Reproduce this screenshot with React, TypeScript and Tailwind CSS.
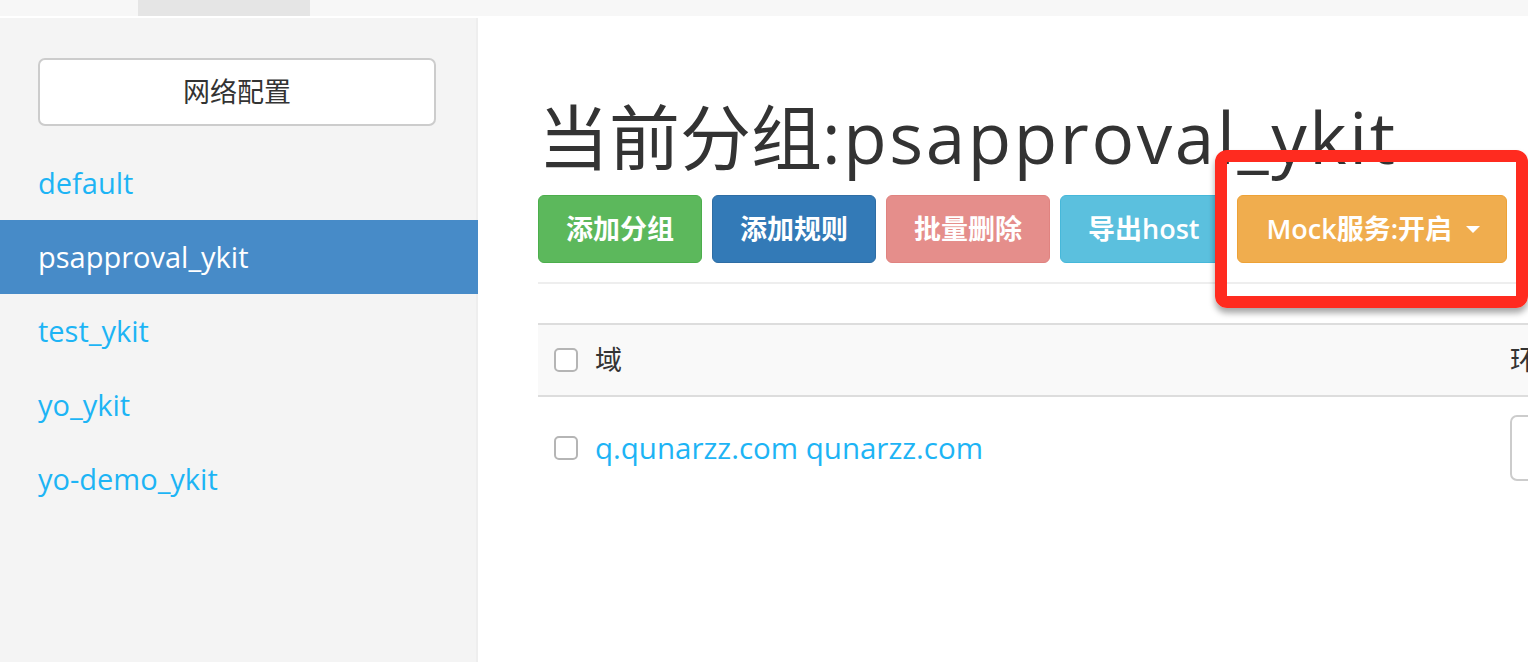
import React from 'react'

const groups = ['default', 'psapproval_ykit', 'test_ykit', 'yo_ykit', 'yo-demo_ykit']

function Sidebar() {
  return (
    <div className="w-[478px] shrink-0 bg-[#f4f4f4] border-r-2 border-[#eeeeee] pt-[40px]">
      <div className="px-[38px]">
        <button className="w-[398px] h-[68px] bg-white border-2 border-[#cccccc] rounded-[7px] text-[27px] text-[#333]">
          网络配置
        </button>
      </div>
      <ul className="mt-[20px]">
        {groups.map((g) => (
          <li
            key={g}
            className={
              g === 'psapproval_ykit'
                ? 'h-[74px] flex items-center pl-[38px] bg-[#478bc8] text-white text-[29px] font-medium mr-[-2px]'
                : 'h-[74px] flex items-center pl-[38px] text-[#1db4f5] text-[29px] font-medium'
            }
          >
            {g}
          </li>
        ))}
      </ul>
    </div>
  )
}

function Checkbox() {
  return <span className="w-[24px] h-[24px] shrink-0 rounded-[5px] border-2 border-[#b5b5b5] bg-white" />
}

function Main() {
  return (
    <div className="flex-1 relative overflow-hidden pl-[60px]">
      <h1 className="mt-[80px] h-[78px] leading-[78px] text-[71px] text-[#333] whitespace-nowrap">
        当前分组<span className="tracking-[2.6px]">:psapproval_ykit</span>
      </h1>
      <div className="mt-[19px] flex gap-[10px] text-white text-[27px] font-semibold">
        <button className="h-[68px] px-[27px] rounded-[6px] bg-[#5cb85c] border border-[#4cae4c]">添加分组</button>
        <button className="h-[68px] px-[27px] rounded-[6px] bg-[#337ab7] border border-[#2e6da4]">添加规则</button>
        <button className="h-[68px] px-[27px] rounded-[6px] bg-[#e58e8b] border border-[#e08380]">批量删除</button>
        <button className="h-[68px] px-[27px] rounded-[6px] bg-[#5bc0de] border border-[#46b8da]">导出host</button>
        <button className="h-[68px] pl-[28px] pr-[26px] rounded-[6px] bg-[#f0ad4e] border border-[#eea236] flex items-center gap-[14px]">
          Mock服务:开启
          <span className="w-0 h-0 border-l-[7px] border-r-[7px] border-t-[7px] border-l-transparent border-r-transparent border-t-white" />
        </button>
      </div>
      <div className="mt-[19px] h-[2px] bg-[#eeeeee] w-[1200px]" />

      <div className="mt-[39px] w-[1400px] border-t-2 border-[#dddddd]">
        <div className="flex h-[72px] bg-[#f9f9f9] border-b-2 border-[#dddddd] items-center text-[27px] text-[#333]">
          <div className="w-[956px] flex items-center gap-[17px] pl-[16px]">
            <Checkbox />
            <span>域</span>
          </div>
          <div className="pl-[16px]">环境</div>
        </div>
        <div className="flex h-[102px] items-center">
          <div className="w-[956px] flex items-center gap-[17px] pl-[16px]">
            <Checkbox />
            <span className="text-[29.5px] text-[#1db4f5]">q.qunarzz.com qunarzz.com</span>
          </div>
          <div className="pl-[16px]">
            <div className="w-[200px] h-[66px] rounded-[7px] border-2 border-[#cccccc] bg-white" />
          </div>
        </div>
      </div>

      <div className="absolute left-[737px] top-[132px] w-[313px] h-[158px] border-[12px] border-[#ff2b1f] rounded-[12px] shadow-[0_5px_6px_rgba(0,0,0,0.35)]" />
    </div>
  )
}

export default function App() {
  return (
    <div className="h-[662px] w-full overflow-hidden bg-white flex flex-col font-['Open_Sans','Noto_Sans_CJK_SC',sans-serif]">
      <div className="h-[16px] shrink-0 bg-[#f7f7f7] flex">
        <div className="ml-[138px] w-[172px] bg-[#e5e5e5]" />
      </div>
      <div className="mt-[2px] flex flex-1">
        <Sidebar />
        <Main />
      </div>
    </div>
  )
}
